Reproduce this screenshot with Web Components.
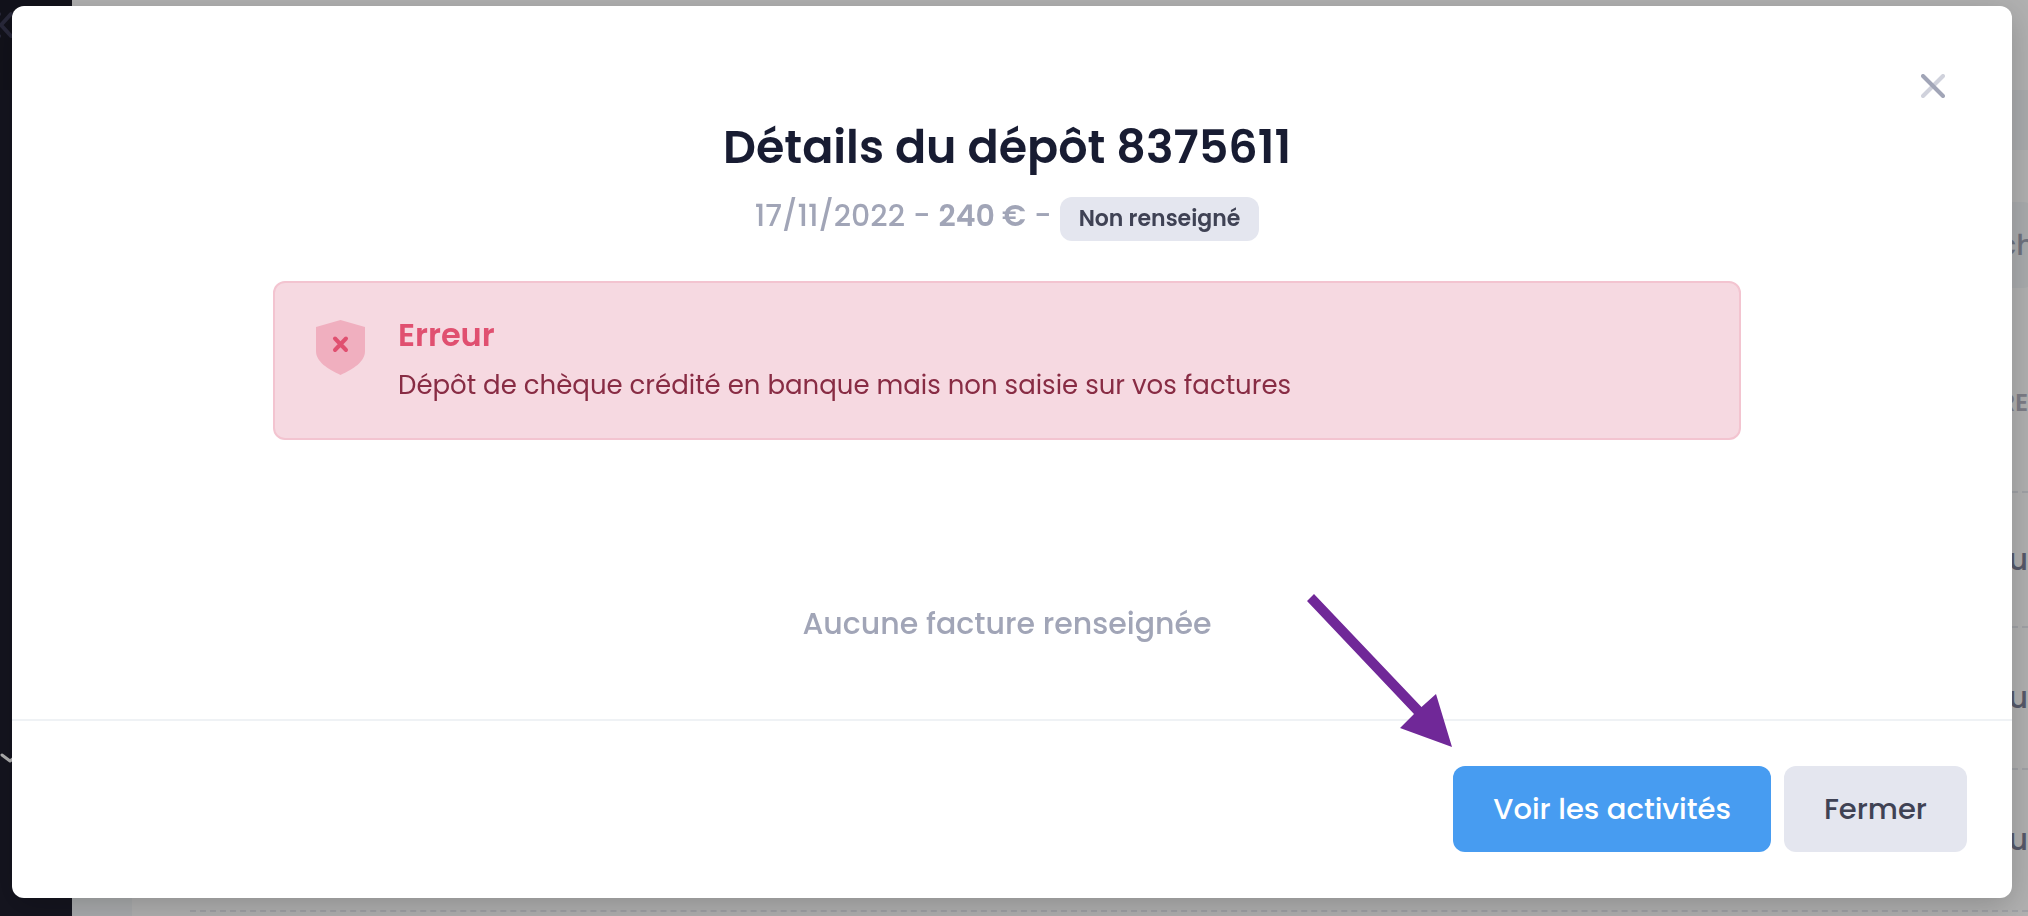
<!DOCTYPE html>
<html lang="fr">
<head>
<meta charset="utf-8">
<title>Détails du dépôt</title>
<style>
  html, body { margin: 0; height: 100%; overflow: hidden; }
  body { font-family: Poppins, Inter, sans-serif; color: #3f4254; background: #f5f8fa; }
</style>
</head>
<body>
<app-backdrop-page></app-backdrop-page>
<modal-dialog>
  <deposit-header slot="header" number="8375611" date="17/11/2022" amount="240 €">
    <status-badge>Non renseigné</status-badge>
  </deposit-header>
  <alert-box heading="Erreur">Dépôt de chèque crédité en banque mais non saisie sur vos factures</alert-box>
  <empty-state>Aucune facture renseignée</empty-state>
  <action-button slot="footer" variant="primary">Voir les activités<pointer-arrow slot="hint"></pointer-arrow></action-button>
  <action-button slot="footer">Fermer</action-button>
</modal-dialog>

<script>
const define = (name, html, setup) => {
  const template = document.createElement('template');
  template.innerHTML = html;
  customElements.define(name, class extends HTMLElement {
    connectedCallback() {
      if (this.shadowRoot) return;
      const root = this.attachShadow({ mode: 'open' });
      root.append(template.content.cloneNode(true));
      if (setup) setup(this, root);
    }
  });
};

define('side-rail', `
  <style>
    :host { display: flex; flex-direction: column; justify-content: space-between; background: #1e1e2d; overflow: hidden; }
    .brand { height: 90px; background: #1a1a27; }
    .item { height: 171px; }
    svg { display: block; fill: none; stroke-linecap: round; stroke-linejoin: round; }
  </style>
  <div class="brand"><svg width="14" height="50" stroke="#3b3b55" stroke-width="4"><path d="M11 14L1 25L11 36M-2 14L-1 14M-2 36L-1 36"/></svg></div>
  <div class="item"><svg width="24" height="30" stroke="#fff" stroke-width="3"><path d="M2 10L10 16L18 10"/></svg></div>
`);

define('page-filter', `
  <style>
    :host { display: block; padding: 52px 0 0; margin-right: -7px; }
    input { display: block; box-sizing: border-box; width: 100%; height: 86px; border: 0; border-radius: 12px; padding: 0; background: #f5f8fa; color: #a1a5b7; font: 500 29px/40px Poppins, Inter, sans-serif; text-align: right; }
  </style>
  <input type="text" value="ch" aria-label="Filtre">
`);

define('page-table', `
  <style>
    :host { display: block; }
    table { width: 100%; border-collapse: collapse; }
    th, td { padding: 0; text-align: right; border-bottom: 2px dashed #e8eaf0; }
    th { height: 203px; color: #b5b5c3; font-size: 24px; font-weight: 600; line-height: 30px; }
    td { height: 140px; color: #7e8299; font-size: 30px; font-weight: 500; line-height: 36px; }
    tr:first-child td { height: 133px; }
    th div { margin-top: 27px; }
  </style>
  <table>
    <thead><tr><th><div>RE</div></th></tr></thead>
    <tbody><tr><td>u</td></tr><tr><td>u</td></tr><tr><td>u</td></tr></tbody>
  </table>
`);

define('app-backdrop-page', `
  <style>
    :host { display: grid; grid-template-columns: 72px 1fr; height: 100%; overflow: hidden; }
    main { display: flex; flex-direction: column; overflow: hidden; }
    .bar { flex: 0 0 90px; background: #fff; }
    .card { flex: 1 0 auto; margin: 60px 0 0 60px; padding-left: 58px; background: #fff; }
  </style>
  <side-rail></side-rail>
  <main>
    <div class="bar"></div>
    <div class="card"><page-filter></page-filter><page-table></page-table></div>
  </main>
`);

define('modal-dialog', `
  <style>
    :host { position: fixed; inset: 0; box-sizing: border-box; padding: 6px 16px 16px 12px; background: rgba(0, 0, 0, .31); }
    .panel { position: relative; background: #fff; border-radius: 12px; box-shadow: 0 8px 32px rgba(0, 0, 0, .2); }
    .body { padding: 113px 271px 73px 261px; }
    .footer { display: flex; justify-content: flex-end; gap: 13px; padding: 45px 45px 46px; border-top: 2px solid #eff2f5; }
    .close { position: absolute; top: 57px; right: 56px; width: 46px; height: 46px; padding: 0; border: 0; background: none; }
    svg { display: block; margin: auto; }
  </style>
  <div class="panel" role="dialog" aria-modal="true">
    <button class="close" aria-label="Fermer la fenêtre"><svg width="24" height="24" viewBox="0 0 24 24" fill="none" stroke="#a1a5b7" stroke-width="4" stroke-linecap="round"><path stroke="#d0d2dc" d="M22 2L2 22"/><path d="M2 2L22 22"/></svg></button>
    <div class="body"><slot name="header"></slot><slot></slot></div>
    <div class="footer"><slot name="footer"></slot></div>
  </div>
`);

define('deposit-header', `
  <style>
    :host { display: block; text-align: center; }
    h1 { margin: 0 0 22px; color: #181c32; font-size: 46px; font-weight: 600; line-height: 56px; }
    .meta { display: flex; justify-content: center; align-items: flex-start; gap: 8px; color: #a1a5b7; font-size: 30px; font-weight: 500; line-height: 38px; }
    strong { font-weight: 600; }
  </style>
  <h1></h1>
  <div class="meta"><span class="date"></span><span>-</span><strong></strong><span>-</span><slot></slot></div>
`, (el, root) => {
  root.querySelector('h1').textContent = 'Détails du dépôt ' + el.getAttribute('number');
  root.querySelector('.date').textContent = el.getAttribute('date');
  root.querySelector('strong').textContent = el.getAttribute('amount');
});

define('status-badge', `
  <style>
    :host { display: block; padding: 0 19px; border-radius: 12px; background: #e4e6ef; color: #3f4254; font-size: 22px; font-weight: 600; line-height: 44px; }
  </style>
  <slot></slot>
`);

define('alert-box', `
  <style>
    :host { display: flex; align-items: flex-start; gap: 33px; margin-top: 40px; padding: 28px 41px 33px; border: 2px solid #f3c4d0; border-radius: 12px; background: #f6d9e1; }
    svg { flex: none; margin-top: 9px; }
    h2 { margin: 0 0 6px; color: #e05070; font-size: 32px; font-weight: 600; line-height: 48px; }
    p { margin: 0; color: #882c44; font-size: 26px; line-height: 40px; }
  </style>
  <svg width="49" height="55" viewBox="0 0 49 55"><path fill="#f0afbf" d="M24.500 0L49 7V31C49 42 37 49 24.500 55C12 49 0 42 0 31V7Z"/><path fill="none" stroke="#e05070" stroke-width="4" stroke-linecap="round" d="M19 18.500L30 30M30 18.500L19 30"/></svg>
  <div><h2></h2><p><slot></slot></p></div>
`, (el, root) => { root.querySelector('h2').textContent = el.getAttribute('heading'); });

define('empty-state', `
  <style>
    :host { display: block; margin-top: 162px; text-align: center; color: #a1a5b7; font-size: 30px; font-weight: 500; line-height: 44px; }
  </style>
  <slot></slot>
`);

define('action-button', `
  <style>
    :host { display: block; position: relative; }
    button { display: block; height: 86px; padding: 0 40px; border: 0; border-radius: 12px; background: #e4e6ef; color: #3f4254; font: inherit; font-size: 29px; font-weight: 500; line-height: 44px; }
    :host([variant="primary"]) button { background: #479cf1; color: #fff; }
  </style>
  <button type="button"><slot></slot></button><slot name="hint"></slot>
`);

define('pointer-arrow', `
  <style>
    :host { position: absolute; right: 100%; bottom: 100%; padding: 0 1px 19px 0; }
    svg { display: block; }
  </style>
  <svg width="145" height="153" viewBox="0 0 145 153" aria-hidden="true"><path fill="#702898" d="M0 7L7 0L114.500 113L129 100L145 153L93 134L107 120Z"/></svg>
`);
</script>
</body>
</html>
